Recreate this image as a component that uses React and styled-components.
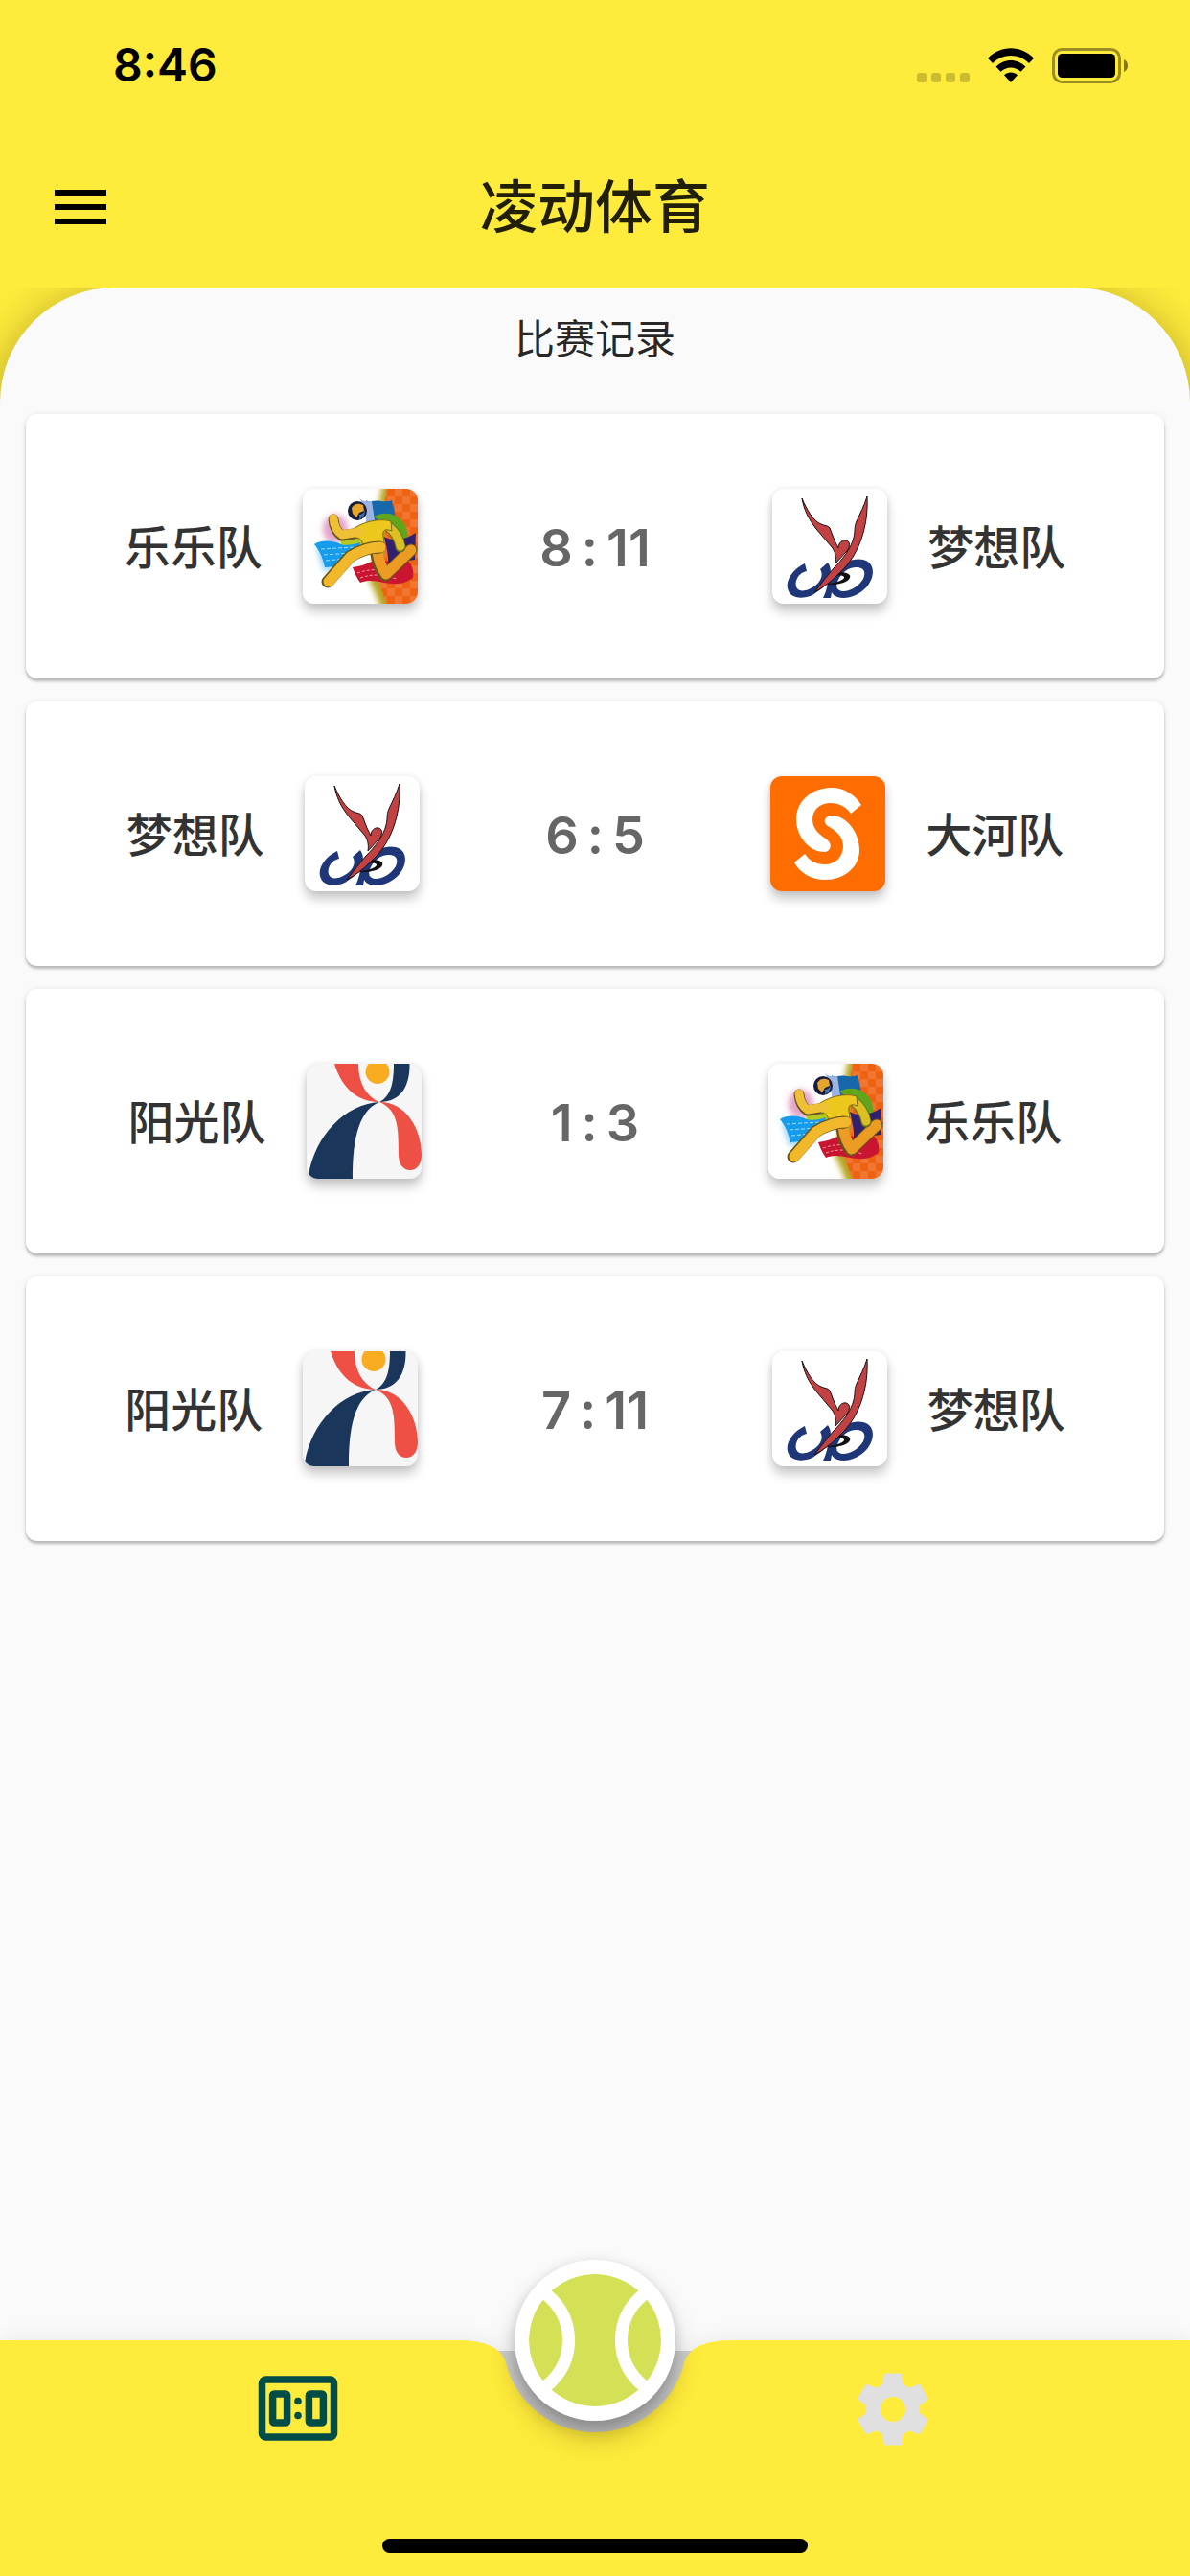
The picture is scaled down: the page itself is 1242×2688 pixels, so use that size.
import React, { useId } from "react";
import styled, { createGlobalStyle } from "styled-components";

const GlobalStyle = createGlobalStyle`
  *, *::before, *::after { box-sizing: border-box; }
  body {
    margin: 0;
    background: #fafafa;
    font-family: Inter, "Noto Sans CJK SC", sans-serif;
  }
  button { border: 0; padding: 0; background: none; font: inherit; color: inherit; cursor: pointer; }
  svg { display: block; }
`;

const Page = styled.div`
  min-height: 100vh;
  display: flex;
  flex-direction: column;
`;

const Header = styled.header`
  background: #ffeb3b;
`;

const StatusBar = styled.div`
  height: 132px;
  padding: 36px 65px 0 118px;
  display: flex;
  justify-content: space-between;
  align-items: flex-start;
`;

const Clock = styled.time`
  font-size: 48px;
  line-height: 64px;
  font-weight: 600;
  color: #000;
`;

const StatusIcons = styled.div`
  height: 64px;
  display: flex;
  align-items: center;
  gap: 19px;
`;

const TitleBar = styled.div`
  height: 168px;
  display: grid;
  grid-template-columns: 168px 1fr 168px;
  align-items: center;
`;

const MenuButton = styled.button`
  height: 168px;
  display: flex;
  align-items: center;
  justify-content: center;
`;

const Title = styled.h1`
  margin: 0;
  text-align: center;
  font-size: 60px;
  line-height: 84px;
  font-weight: 500;
  color: rgba(0, 0, 0, 0.87);
`;

const Main = styled.main`
  flex: 1;
  display: flex;
  overflow: hidden;
  background: linear-gradient(#ffeb3b 0 120px, #fafafa 120px);
`;

const Panel = styled.section`
  flex: 1;
  min-width: 0;
  padding: 18px 27px 24px;
  border-radius: 120px 120px 0 0;
  background: #fafafa;
  box-shadow: 0 9px 48px rgba(0, 0, 0, 0.32);
`;

const PanelTitle = styled.h2`
  margin: 0 0 42px;
  text-align: center;
  font-size: 42px;
  line-height: 72px;
  font-weight: 400;
  color: rgba(0, 0, 0, 0.87);
`;

const MatchList = styled.ul`
  margin: 0;
  padding: 0;
  list-style: none;
  display: flex;
  flex-direction: column;
  gap: 24px;
`;

const MatchCard = styled.li`
  height: 276px;
  padding: 0 39px;
  display: flex;
  align-items: center;
  justify-content: space-around;
  border-radius: 12px;
  background: #fff;
  box-shadow: 0 3px 3px rgba(0, 0, 0, 0.22), 0 1px 6px rgba(0, 0, 0, 0.1);
`;

const Team = styled.div`
  display: flex;
  flex-direction: ${(p) => (p.$away ? "row-reverse" : "row")};
  align-items: center;
  gap: 42px;
`;

const TeamName = styled.span`
  padding-top: 4px;
  font-size: 48px;
  line-height: 72px;
  font-weight: 500;
  color: #333;
`;

const Crest = styled.span`
  width: 120px;
  height: 120px;
  overflow: hidden;
  border-radius: 12px;
  background: ${(p) => p.$fill};
  box-shadow: 0 8px 12px rgba(0, 0, 0, 0.22), 0 0 6px rgba(0, 0, 0, 0.08);
`;

const Score = styled.span`
  padding-top: 4px;
  display: flex;
  gap: 9px;
  font-size: 54px;
  line-height: 72px;
  font-weight: 600;
  color: #666;
`;

const Nav = styled.nav`
  position: relative;
  height: 246px;
  display: flex;
  flex-direction: column;
  justify-content: space-between;
  align-items: center;
  padding: 27px 0 24px;
  background: linear-gradient(#fafafa 0 11px, #d2d2d2 11px);
`;

const NavShape = styled.div`
  position: absolute;
  inset: 0;
  display: flex;
  filter: drop-shadow(0 -3px 10px rgba(0, 0, 0, 0.06));
`;

const NavSide = styled.span`
  flex: 1;
  background: #ffeb3b;
`;

const NavItems = styled.div`
  position: relative;
  width: 100%;
  display: flex;
`;

const NavButton = styled.button`
  flex: 1;
  height: 90px;
  display: flex;
  justify-content: center;
`;

const BallButton = styled.button`
  position: absolute;
  left: 50%;
  top: 0;
  width: 168px;
  height: 168px;
  transform: translate(-50%, -50%);
  display: flex;
  align-items: center;
  justify-content: center;
  border-radius: 50%;
  background: #fff;
  box-shadow: 0 12px 18px -3px rgba(0, 0, 0, 0.18), 0 18px 30px rgba(0, 0, 0, 0.18),
    0 0 12px rgba(0, 0, 0, 0.07);
`;

const HomeIndicator = styled.div`
  position: relative;
  width: 444px;
  height: 15px;
  border-radius: 8px;
  background: #000;
`;

function SignalDots() {
  return (
    <svg width="55" height="37" viewBox="0 0 55 37" fill="#000" opacity="0.2">
      {[0, 15, 30, 45].map((x) => (
        <rect key={x} x={x} y="26" width="10" height="10" rx="3" />
      ))}
    </svg>
  );
}

function WifiIcon() {
  return (
    <svg width="48" height="37" viewBox="0 0 48 37">
      <path d="M0 10.8C6.5 4 15 .3 24 .3s17.500 3.700 24 10.500l-5 5.200C37.800 10.800 31.200 8 24 8S10.200 10.800 5 16z" />
      <path d="M8.500 19.600C12.700 15.500 18.200 13 24 13s11.300 2.500 15.500 6.600l-5 5.200C31.700 22 28 20.400 24 20.400S16.300 22 13.500 24.800z" />
      <path d="M17 28.200c2-1.700 4.400-2.700 7-2.700s5 1 7 2.700l-7 7.800z" />
    </svg>
  );
}

function BatteryIcon() {
  return (
    <svg width="79" height="37" viewBox="0 0 79 37">
      <rect x="1.500" y="1.500" width="69" height="34" rx="9" fill="none" stroke="#000" strokeOpacity="0.4" strokeWidth="3" />
      <rect x="6" y="6" width="60" height="25" rx="4.500" />
      <path d="M75 12c2.400 1 4 3.500 4 6.500s-1.600 5.500-4 6.500z" fillOpacity="0.5" />
    </svg>
  );
}

function MenuIcon() {
  return (
    <svg width="72" height="72" viewBox="0 0 24 24">
      <path d="M3 18h18v-2H3v2zm0-5h18v-2H3v2zm0-7v2h18V6H3z" />
    </svg>
  );
}

function ScoreboardIcon() {
  return (
    <svg width="90" height="90" viewBox="0 0 90 90" fill="none" stroke="#004c47">
      <rect x="7.500" y="14" width="75" height="60" rx="4" strokeWidth="7.500" />
      <rect x="18.600" y="29" width="15" height="30" rx="1.500" strokeWidth="7.500" />
      <rect x="56.400" y="29" width="15" height="30" rx="1.500" strokeWidth="7.500" />
      <circle cx="45" cy="36.500" r="3.800" fill="#004c47" stroke="none" />
      <circle cx="45" cy="51.500" r="3.800" fill="#004c47" stroke="none" />
    </svg>
  );
}

function GearIcon() {
  return (
    <svg width="90" height="90" viewBox="0 0 24 24" fill="#e0e0e0">
      <path d="M19.43 12.98c.04-.32.07-.64.07-.98s-.03-.66-.07-.98l2.110-1.650c.19-.15.24-.42.12-.64l-2-3.460c-.12-.22-.39-.3-.61-.22l-2.490 1c-.52-.4-1.080-.73-1.690-.98l-.38-2.650C14.46 2.180 14.25 2 14 2h-4c-.25 0-.46.18-.49.42l-.38 2.650c-.61.25-1.170.59-1.690.98l-2.490-1c-.23-.09-.49 0-.61.22l-2 3.460c-.13.22-.07.49.12.64l2.110 1.650c-.04.32-.07.65-.07.98s.03.66.07.98l-2.110 1.650c-.19.15-.24.42-.12.64l2 3.460c.12.22.39.3.61.22l2.490-1c.52.4 1.080.73 1.690.98l.38 2.650c.03.24.24.42.49.42h4c.25 0 .46-.18.49-.42l.38-2.650c.61-.25 1.170-.59 1.690-.98l2.490 1c.23.09.49 0 .61-.22l2-3.460c.12-.22.07-.49-.12-.64l-2.110-1.650zM12 15.500c-1.930 0-3.500-1.570-3.500-3.500s1.570-3.500 3.500-3.500 3.500 1.570 3.500 3.500-1.570 3.500-3.500 3.500z" />
    </svg>
  );
}

function TennisBall() {
  const clip = useId();
  return (
    <svg width="138" height="138" viewBox="-69 -69 138 138">
      <clipPath id={clip}>
        <circle r="69" />
      </clipPath>
      <g clipPath={`url(#${clip})`}>
        <circle r="69" fill="#d4e157" />
        <g fill="none" stroke="#fff" strokeWidth="13">
          <circle cx="-88" r="60.500" />
          <circle cx="88" r="60.500" />
        </g>
      </g>
    </svg>
  );
}

function NavNotch() {
  return (
    <svg width="288" height="246" viewBox="0 0 288 246">
      <path d="M0 0Q45 0 50.900 23.500A96 96 0 0 0 237.100 23.500Q243 0 288 0V246H0z" fill="#ffeb3b" />
    </svg>
  );
}

function RunnerCrest() {
  const id = useId();
  return (
    <svg width="120" height="120" viewBox="0 0 120 120">
      <defs>
        <filter id={`${id}b`} x="-50%" y="-50%" width="200%" height="200%">
          <feGaussianBlur stdDeviation="3" />
        </filter>
        <pattern id={`${id}c`} width="16" height="16" patternUnits="userSpaceOnUse">
          <path d="M0 0h8v8H0zM8 8h8v8H8z" fill="#fff" fillOpacity="0.13" />
        </pattern>
      </defs>
      <rect width="120" height="120" fill="#fff" />
      <g filter={`url(#${id}b)`}>
        <path d="M84-6C76 20 82 60 68 92c4 10 10 20 14 34h16V-6z" fill="#b6a01e" />
        <ellipse cx="34" cy="42" rx="13" ry="15" fill="#e3a3c6" />
        <path d="M14 60l40-2-6 24-26 4z" fill="#8fd0f8" />
      </g>
      <path d="M88 0h32v120H88C82 104 78 98 80 86 92 60 82 30 88 0z" fill="#ee6212" />
      <path d="M88 0h32v120H88C82 104 78 98 80 86 92 60 82 30 88 0z" fill={`url(#${id}c)`} />
      <path d="M66 12c3 2 4 2 6 1 8-2 14 2 21-1l5 22-16 4-14-6z" fill="#1768ab" />
      <path d="M58 8c3 5 8 6 14 5l3 20-9 4c0-10-1-18-8-29z" fill="#9db4e2" />
      <path d="M74 29c10-6 24-4 31 6 4 6 5 12 4 22l-14-2-12-20z" fill="#5fa61c" />
      <path d="M40 50l22-4 2 14-24 2z" fill="#b4c81f" />
      <path d="M12 58c8-5 20-4 28 0 6 2 14 0 20-2-2 8-8 18-14 26-8-4-16 0-23 0-2-10-6-18-11-24z" fill="#159cec" />
      <path d="M19 63l34-2M22 69l29-2M24 75l21-2" stroke="#9cdcff" strokeWidth="1" strokeDasharray="4 2" />
      <path d="M52 82c8-1 14-3 20-6l38-1c5 6 6 12 5 18-6 4-12 7-22 6-10 0-20-6-33-1-4-5-6-11-8-16z" fill="#ca1530" />
      <path d="M57 88c14-5 25-4 40 0M60 93c14-5 25-3 38 1" fill="none" stroke="#f49aa5" strokeWidth="1" strokeDasharray="3 2" />
      <path d="M85 50c10 6 22 3 33-4l-1 28-28 4c1-9-2-18-4-28z" fill="#30206f" />
      <g fill="none" strokeLinecap="round" strokeLinejoin="round">
        <path d="M77 68q2 14 9 22l27-26" stroke="#66561a" strokeWidth="13" />
        <path d="M78 66q2 14 9 23l26-25" stroke="#ec9b23" strokeWidth="11" />
        <path d="M89 39q11 9 13 22" stroke="#66721a" strokeWidth="11" />
        <path d="M89 39q11 9 13 21" stroke="#dcbf22" strokeWidth="9" />
        <path d="M32 32q1 12 9 17l18-3" stroke="#66561a" strokeWidth="11" />
      </g>
      <path d="M50 44c10-9 30-14 42-10l1 10c-8-3-10 0-9 6 2 8 0 14-6 18L63 60c-1-6-3-9-8-9z" fill="#ecc81c" stroke="#7d6a1e" strokeWidth="1" />
      <g fill="none" strokeLinecap="round" strokeLinejoin="round">
        <path d="M32 31q1 12 9 17l18-3" stroke="#efc036" strokeWidth="9" />
        <path d="M26 97l23-26q16-10 31-10" stroke="#66561a" strokeWidth="13" />
        <path d="M27 97l23-26q16-10 31-10" stroke="#f0b82a" strokeWidth="11" />
      </g>
      <circle cx="57" cy="23" r="10" fill="#171b3c" />
      <path d="M51 20c4-6 9-4 12-3l1 6-5 2-3 5-4-4z" fill="#e5a52c" />
      <path d="M59 27c4 0 5-3 6-5 0 5-2 8-6 10z" fill="#3c75b5" />
    </svg>
  );
}

function DreamCrest() {
  return (
    <svg width="120" height="120" viewBox="0 0 120 120">
      <g fill="#1f3779">
        <path d="M34 78C23 83 14 94 16 104c2 10 14 12 26 7l10-7c10-10 11-20 6-27l-8 7c5 8-2 17-12 21-10 4-15-1-13-9 2-6 6-9 11-10z" />
        <path fillRule="evenodd" d="M53 114c5-9 5-22 11-29 9-9 22-13 31-11 12 3 13 17 4 28-9 10-22 14-31 11-3-1-5-3-6-5l-1 6zM69 95c-4 7-1 12 5 12 8 0 17-6 21-13 3-7 1-12-7-12-9 0-16 6-19 13z" />
      </g>
      <path d="M66 88c10-2 17 1 15 5-2 5-14 8-26 7 10-2 19-4 20-7 1-2-4-3-10-2z" fill="#111" />
      <g fill="#c24244" stroke="#1a1212" strokeWidth="1">
        <path d="M31 10c5 12 12 24 20 27 4 2 7 1 9 4l5 13 4 8c0-6 5-9 8-8 5 1 4 7 1 11L66 78c1-6 0-11-3-16L46 42C38 32 33 22 31 10z" />
        <path d="M99 8c1 18-2 36-9 52-6 13-12 21-23 31-7 7-14 12-23 17 7-9 14-18 20-25 9-9 18-20 21-32 2-8 0-10 3-17C92 25 96 18 99 8z" />
      </g>
    </svg>
  );
}

function RiverCrest() {
  return (
    <svg width="120" height="120" viewBox="0 0 120 120" fill="#fff">
      <path d="M95 30C88 19 77 12 64 12 43 12 27 26 27 45c0 18 14 34 29 34 7 0 9-8 4-12-6-5-16-10-16-22 0-10 8-17 19-17 9 0 16 4 21 11z" />
      <path d="M25 90l11-9c5 7 11 11 21 11 11 0 19-8 19-19 0-10-7-16-16-21-6-4-3-11 4-11 15 0 29 17 29 36 0 18-16 31-36 31-14 0-26-7-32-18z" />
    </svg>
  );
}

function SunshineCrest() {
  return (
    <svg width="120" height="120" viewBox="0 0 120 120">
      <path d="M29 0c6 20 20 40 47 40C62 34 54 20 54 0z" fill="#ee5045" />
      <circle cx="74" cy="8.500" r="12.500" fill="#f9ac20" />
      <path d="M91 0c0 20-3 34-15 40 21 0 32-15 31.500-40z" fill="#1a365a" />
      <path d="M76 40C40 42 9 75 2 116l4 4h42c0-35 4-70 28-80z" fill="#1a365a" />
      <path d="M76 40c29 0 44 30 44 55 0 10-5 16-12 16s-12-6-12-16c0-30-1-47-20-55z" fill="#ee5045" />
    </svg>
  );
}

const TEAMS = {
  lele: { name: "乐乐队", Art: RunnerCrest, fill: "#fff" },
  dream: { name: "梦想队", Art: DreamCrest, fill: "#fff" },
  river: { name: "大河队", Art: RiverCrest, fill: "#ff6d00" },
  sunshine: { name: "阳光队", Art: SunshineCrest, fill: "#f6f6f6" },
};

const MATCHES = [
  { home: "lele", away: "dream", score: [8, 11] },
  { home: "dream", away: "river", score: [6, 5] },
  { home: "sunshine", away: "lele", score: [1, 3] },
  { home: "sunshine", away: "dream", score: [7, 11] },
];

function TeamBadge({ team, away }) {
  const { name, Art, fill } = TEAMS[team];
  return (
    <Team $away={away}>
      <TeamName>{name}</TeamName>
      <Crest $fill={fill}>
        <Art />
      </Crest>
    </Team>
  );
}

export default function App() {
  return (
    <Page>
      <GlobalStyle />
      <Header>
        <StatusBar>
          <Clock>8:46</Clock>
          <StatusIcons>
            <SignalDots />
            <WifiIcon />
            <BatteryIcon />
          </StatusIcons>
        </StatusBar>
        <TitleBar>
          <MenuButton type="button" aria-label="菜单">
            <MenuIcon />
          </MenuButton>
          <Title>凌动体育</Title>
        </TitleBar>
      </Header>
      <Main>
        <Panel>
          <PanelTitle>比赛记录</PanelTitle>
          <MatchList>
            {MATCHES.map((match, i) => (
              <MatchCard key={i}>
                <TeamBadge team={match.home} />
                <Score>
                  <span>{match.score[0]}</span>
                  <span>:</span>
                  <span>{match.score[1]}</span>
                </Score>
                <TeamBadge team={match.away} away />
              </MatchCard>
            ))}
          </MatchList>
        </Panel>
      </Main>
      <Nav>
        <NavShape>
          <NavSide />
          <NavNotch />
          <NavSide />
        </NavShape>
        <NavItems>
          <NavButton type="button" aria-label="比分">
            <ScoreboardIcon />
          </NavButton>
          <NavButton type="button" aria-label="设置">
            <GearIcon />
          </NavButton>
        </NavItems>
        <HomeIndicator />
        <BallButton type="button" aria-label="开始比赛">
          <TennisBall />
        </BallButton>
      </Nav>
    </Page>
  );
}
